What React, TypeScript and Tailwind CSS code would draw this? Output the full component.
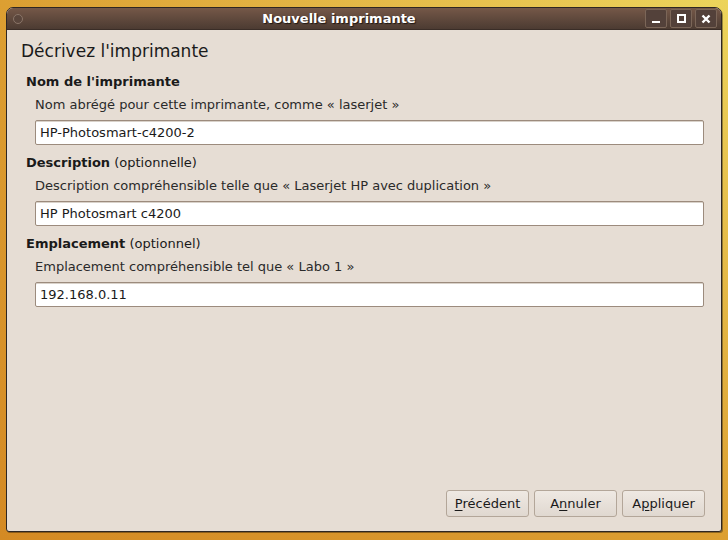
import React from 'react';

const font = { fontFamily: '"DejaVu Sans", "Liberation Sans", sans-serif' };

const Entry: React.FC<{ value: string }> = ({ value }) => (
  <div className="ml-[28px] mr-[17px] h-[25px] rounded-[2px] border border-[#9c8b7d] bg-white pl-[4px] flex items-center text-[13px] text-[#1a1a1a] shadow-[inset_0_1px_0_#d9d2ca]">
    {value}
  </div>
);

const Field: React.FC<{ label: string; extra?: string; hint: string; value: string }> = ({ label, extra, hint, value }) => (
  <div className="flex flex-col">
    <div className="ml-[19px] h-[19px] text-[13px] text-[#1a1a1a] leading-[19px]">
      <span className="font-bold">{label}</span>
      {extra && <span> {extra}</span>}
    </div>
    <div className="ml-[28px] mt-[4px] h-[19px] text-[13px] text-[#2a2a2a] leading-[19px]">{hint}</div>
    <div className="mt-[6px]">
      <Entry value={value} />
    </div>
  </div>
);

const WinButton: React.FC<{ children: React.ReactNode }> = ({ children }) => (
  <div className="w-[22px] h-[19px] rounded-[2px] border border-[#7b6658] bg-[#53413a] flex items-center justify-center">
    {children}
  </div>
);

const Button: React.FC<{ pre: string; u: string; post: string }> = ({ pre, u, post }) => (
  <div className="w-[83px] h-[27px] rounded-[3px] border border-[#b3a699] bg-gradient-to-b from-[#efe9e3] to-[#e0d8d0] flex items-center justify-center text-[13px] text-[#1a1a1a]">
    {pre}
    <span className="underline underline-offset-2">{u}</span>
    {post}
  </div>
);

export default function App() {
  return (
    <div
      className="w-[728px] h-[540px] overflow-hidden bg-gradient-to-tr from-[#d48a24] via-[#dc9f32] to-[#ecd45c] pt-[7px] pl-[6px]"
      style={font}
    >
      <div className="w-[716px] h-[525px] rounded-t-[7px] rounded-b-[3px] border border-[#2e2622] bg-[#e6ddd4] flex flex-col overflow-hidden shadow-[1px_1px_0_rgba(0,0,0,0.35)]">
        {/* barre de titre */}
        <div className="h-[22px] bg-gradient-to-b from-[#755848] to-[#4c3b32] border-b border-[#3a2d27] flex items-center">
          <div className="ml-[6px] w-[10px] h-[10px] rounded-full border border-[#8a7568] bg-[#5a463c]" />
          <div className="flex-1 pl-[10px] text-center text-[13px] font-bold text-white [text-shadow:1px_1px_1px_#1e1612]">
            Nouvelle imprimante
          </div>
          <div className="mr-[4px] flex gap-[3px]">
            <WinButton>
              <div className="w-[8px] h-[2px] bg-white mt-[6px]" />
            </WinButton>
            <WinButton>
              <div className="w-[9px] h-[9px] border-2 border-white" />
            </WinButton>
            <WinButton>
              <svg width="10" height="10" viewBox="0 0 10 10">
                <path d="M1.5 1.5 L8.5 8.5 M8.5 1.5 L1.5 8.5" stroke="white" strokeWidth="2.4" />
              </svg>
            </WinButton>
          </div>
        </div>

        {/* contenu */}
        <div className="flex-1 flex flex-col">
          <div className="ml-[14px] mt-[10px] h-[22px] text-[17px] text-[#1a1a1a] leading-[22px]">Décrivez l'imprimante</div>
          <div className="mt-[10px] flex flex-col gap-[8px]">
            <Field
              label="Nom de l'imprimante"
              hint="Nom abrégé pour cette imprimante, comme « laserjet »"
              value="HP-Photosmart-c4200-2"
            />
            <Field
              label="Description"
              extra="(optionnelle)"
              hint="Description compréhensible telle que « Laserjet HP avec duplication »"
              value="HP Photosmart c4200"
            />
            <Field
              label="Emplacement"
              extra="(optionnel)"
              hint="Emplacement compréhensible tel que « Labo 1 »"
              value="192.168.0.11"
            />
          </div>
          <div className="mt-auto mb-[14px] mr-[16px] flex justify-end gap-[5px]">
            <Button pre="" u="P" post="récédent" />
            <Button pre="A" u="n" post="nuler" />
            <Button pre="A" u="p" post="pliquer" />
          </div>
        </div>
      </div>
    </div>
  );
}
